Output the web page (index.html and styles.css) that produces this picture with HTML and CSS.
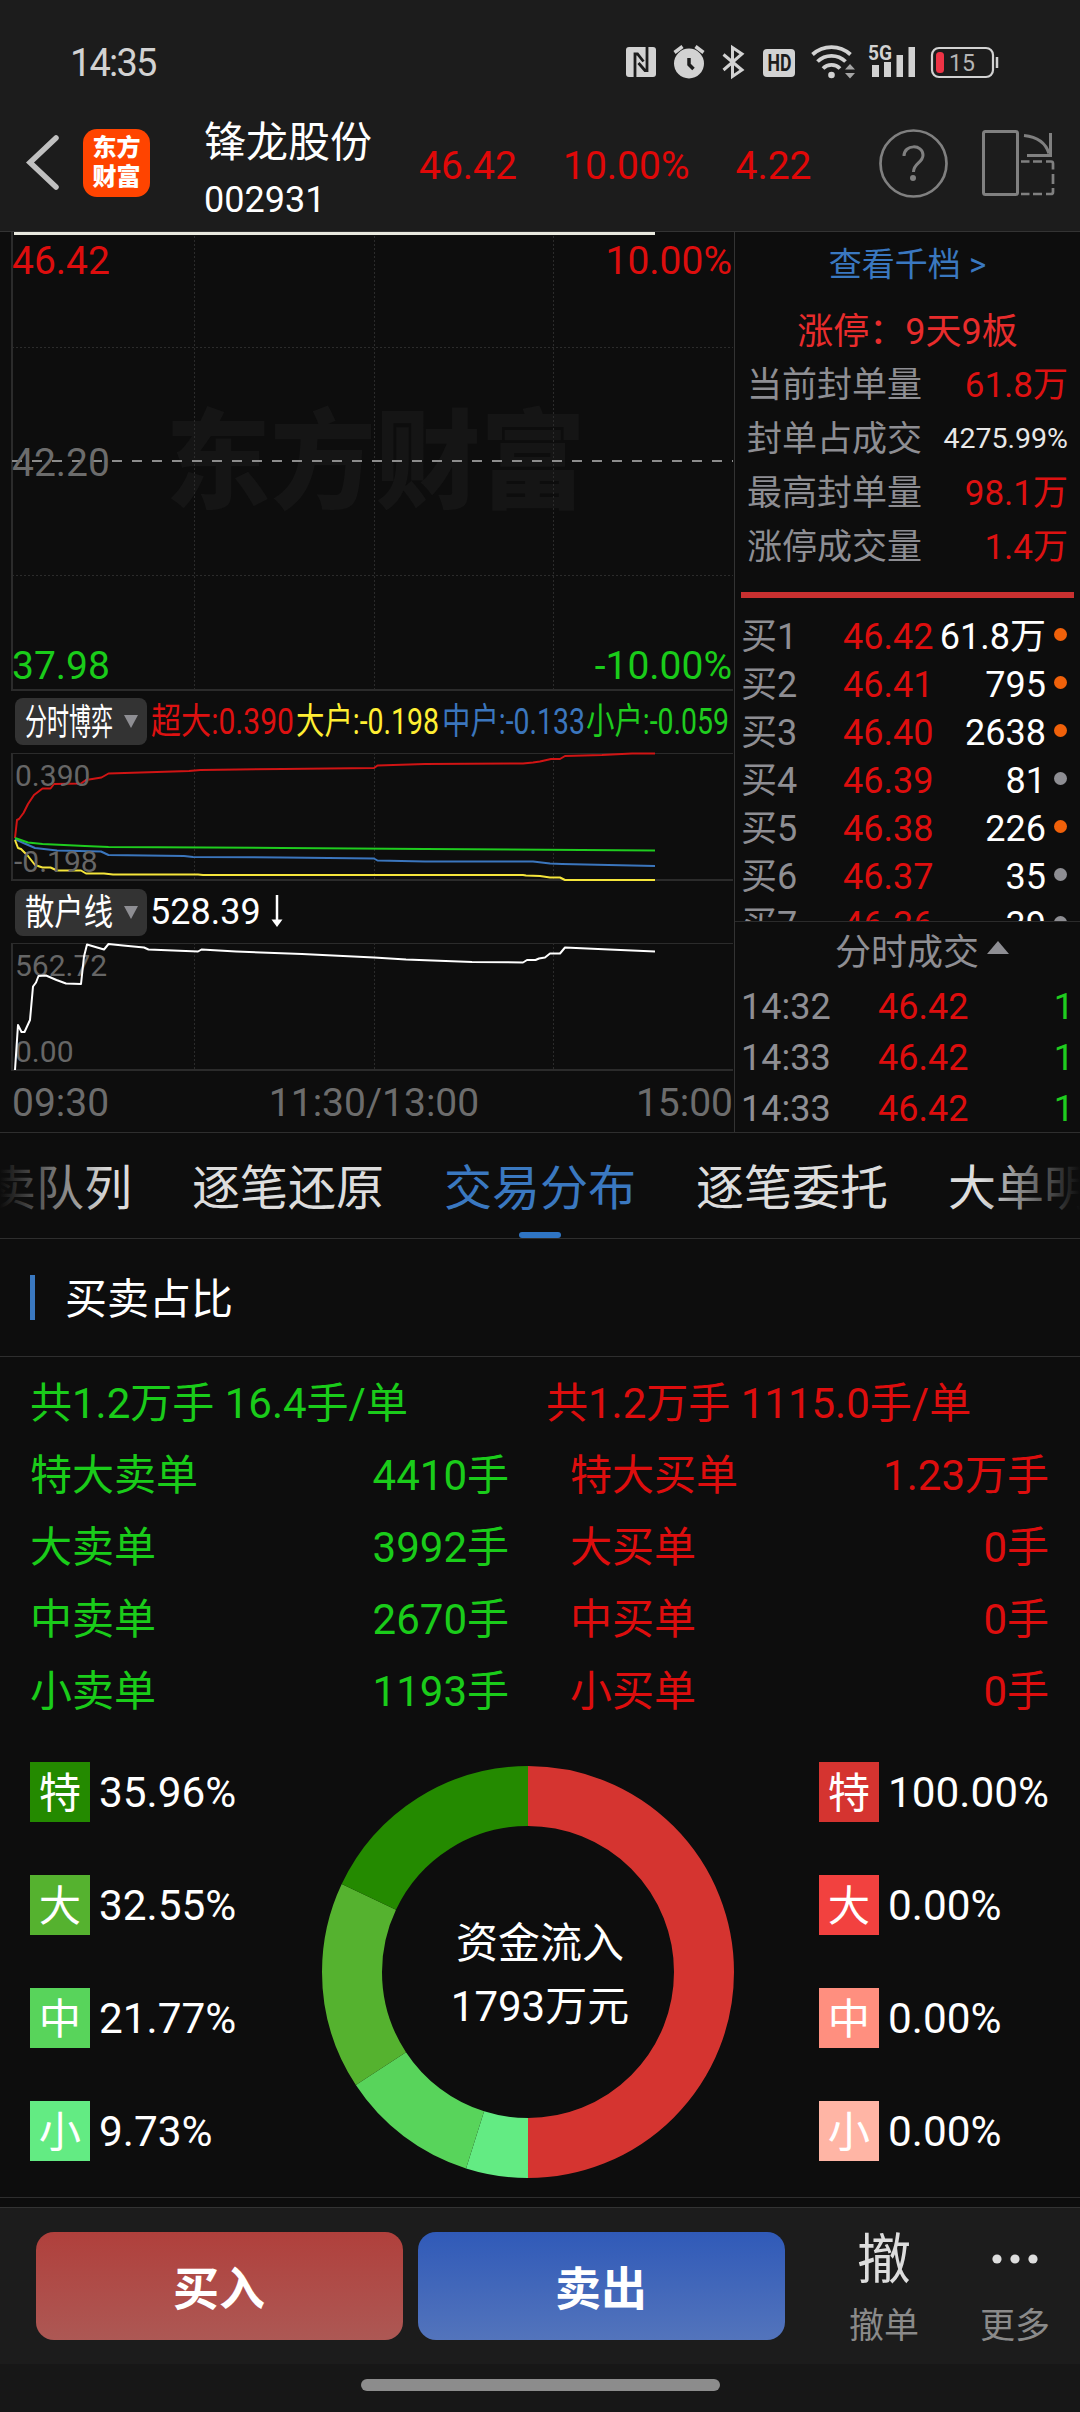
FILE: index.html
```html
<!DOCTYPE html>
<html lang="zh-CN">
<head>
	<title>锋龙股份 002931</title>
	<meta charset="UTF-8">
	<meta name="viewport" content="width=device-width, initial-scale=1.0">
	<link rel="stylesheet" href="styles.css">
</head>
<body>
	<div class="status-bar">
		<span class="clock">14:35</span>
		<svg class="status-icons" width="380" height="40" viewBox="622 42 380 40">
			<!-- nfc -->
			<rect x="626" y="47" width="30" height="30" rx="3" fill="#d2d2d2"/>
			<path d="M635 77V54H637.500L643.500 61.500M647 47V70.500H645L638.500 63" fill="none" stroke="#1c1c1c" stroke-width="2.800"/>
			<!-- alarm -->
			<circle cx="689" cy="63.500" r="15" fill="#d2d2d2"/>
			<path d="M674.500 52.500l8-6M703.500 52.500l-8-6" stroke="#d2d2d2" stroke-width="3.500"/>
			<path d="M689 58v6.500l4.500 4.500" fill="none" stroke="#1c1c1c" stroke-width="3.500"/>
			<!-- bluetooth -->
			<path d="M723.500 54.500L742 70L732.500 76.500V47.500L742 54L723.500 70" fill="none" stroke="#d2d2d2" stroke-width="3"/>
			<!-- hd -->
			<rect x="763" y="49" width="32" height="28" rx="4" fill="#d2d2d2"/>
			<text x="767.500" y="71" class="hd" textLength="24" lengthAdjust="spacingAndGlyphs">HD</text>
			<!-- wifi -->
			<g fill="none" stroke="#d2d2d2" stroke-width="3.800">
				<path d="M812.500 54.500a28 28 0 0 1 38 0"/>
				<path d="M817.500 61.500a20 20 0 0 1 28 0"/>
				<path d="M823 68.500a12 12 0 0 1 17 0"/>
			</g>
			<circle cx="831.500" cy="75" r="3.300" fill="#d2d2d2"/>
			<path d="M850 64l5 5.500h-10zM850 78.500l5-5.500h-10z" fill="#a5a5a5"/>
			<!-- signal -->
			<text x="868" y="60" class="five-g" textLength="24" lengthAdjust="spacingAndGlyphs">5G</text>
			<path d="M872 65h7v12h-7zM884 62h7v15h-7zM896.500 55h6.500v22h-6.500zM908.500 47h6.500v30h-6.500z" fill="#d2d2d2"/>
			<!-- battery -->
			<rect x="932" y="48" width="61" height="29" rx="7" fill="none" stroke="#d2d2d2" stroke-width="2.200"/>
			<path d="M997 57v11" stroke="#d2d2d2" stroke-width="2.500"/>
			<rect x="936" y="52" width="8" height="21" rx="3.500" fill="#ee3345"/>
			<text x="949" y="71" class="battery">15</text>
		</svg>
	</div>

	<div class="header">
		<svg class="back" width="36" height="60" viewBox="25 134 36 60">
			<path d="M56 139L30 163.500L56 188" fill="none" stroke="#c0c0c0" stroke-width="5.500" stroke-linecap="round"/>
		</svg>
		<div class="logo"><span>东方</span><span>财富</span></div>
		<div class="stock">
			<div class="stock-name">锋龙股份</div>
			<div class="stock-code">002931</div>
		</div>
		<div class="quote">
			<span>46.42</span>
			<span>10.00%</span>
			<span>4.22</span>
		</div>
		<svg class="header-icons" width="180" height="72" viewBox="878 127 180 72" fill="none" stroke="#808080">
			<circle cx="913.500" cy="163.500" r="33" stroke-width="2.700"/>
			<path d="M904 156c0-12 19-12 19-1c0 8-9.500 8-9.500 17" stroke-width="3"/>
			<circle cx="913" cy="178" r="3" fill="#808080" stroke="none"/>
			<rect x="983.500" y="131.500" width="34" height="63" rx="2" stroke-width="3"/>
			<path d="M1024 135.500q20 2 25 18" stroke-width="3"/>
			<path d="M1050.500 133v22.500H1027" stroke-width="3"/>
			<path d="M1021 161.500h8.500m3.500 0h9m4 0h5q2 0 2 2v6m0 4.500v10m0 4v4q0 2-2 2h-5m-4 0h-9m-3.500 0H1021" stroke-width="2.700"/>
		</svg>
	</div>

	<div class="market">
		<div class="charts">
			<svg class="price-chart" width="734" height="460" viewBox="0 232 734 460">
				<text x="375.500" y="500" class="watermark" textLength="420" lengthAdjust="spacingAndGlyphs">东方财富</text>
				<path class="grid" d="M194.500 232V690M374.500 232V690M553.500 232V690M12 347.500H733M12 575.500H733"/>
				<path class="frame" d="M12 232V690H733"/>
				<path class="mid" d="M12 461H733"/>
				<path d="M14 233.500H655" stroke="#e9e9df" stroke-width="3"/>
				<text x="12" y="274" class="up">46.42</text>
				<text x="732" y="274" class="up end">10.00%</text>
				<text x="12" y="476" class="axis">42.20</text>
				<text x="12" y="679" class="down">37.98</text>
				<text x="732" y="679" class="down end">-10.00%</text>
			</svg>

			<div class="indicator">
				<button class="pick"><svg width="90" height="44"><text x="0" y="35" textLength="88" lengthAdjust="spacingAndGlyphs">分时博弈</text></svg><i></i></button>
				<svg class="legend" width="582" height="48">
					<text x="0" y="36" textLength="143" lengthAdjust="spacingAndGlyphs">超大:0.390</text>
					<text x="145" y="36" textLength="143" lengthAdjust="spacingAndGlyphs">大户:-0.198</text>
					<text x="291" y="36" textLength="143" lengthAdjust="spacingAndGlyphs">中户:-0.133</text>
					<text x="435" y="36" textLength="143" lengthAdjust="spacingAndGlyphs">小户:-0.059</text>
				</svg>
			</div>

			<svg class="sub-chart" width="734" height="132" viewBox="0 751 734 132">
				<path class="grid" d="M194.500 753V880M374.500 753V880M553.500 753V880"/>
				<path class="frame thin" d="M12 753.500H733"/>
				<path class="frame" d="M12 753V880H733"/>
				<g class="lines">
					<polyline stroke="#d01414" points="15,838 17,820 19,819 23.500,813 28,804 34,795 42.500,788.500 50.500,788.500 54,784 81,783.500 86,780 101.500,777.500 108.500,773.500 189,771 200.500,770 283,769 374,768 377.500,765.500 425,764 523,763.500 533,762.500 540,761.500 551,759 560,759 565,756 602,755 632,753.500 655,753.500"/>
					<polyline stroke="#3b76bd" points="15,839 23.500,843 35,848 57,850.500 101,851.500 108.500,855 184,856 193,857 283,857.500 374,858.500 377.500,860.500 425,861.500 533,861.500 550,863.500 562,864 655,866"/>
					<polyline stroke="#f5e53b" points="15,840 18,848 21,849 28,856 35,865 42.500,867.500 50.500,867.500 57,870.500 81,870.500 86,873.500 104,873.500 113,874.500 198,874.500 203,875 523,875 526,875.500 540,876 550,877.500 560,877.500 565,880 655,880"/>
					<polyline stroke="#1fcc1f" points="15,838 28,842.500 42.500,844 85,846 108.500,847 283,848 425,849 655,850.500"/>
				</g>
				<text x="15" y="786" class="scale">0.390</text>
				<text x="14" y="872" class="scale">-0.198</text>
			</svg>

			<div class="indicator second">
				<button class="pick"><svg width="90" height="44"><text x="0" y="35" textLength="88" lengthAdjust="spacingAndGlyphs">散户线</text></svg><i></i></button>
				<span class="value">528.39</span>
				<svg width="14" height="34" viewBox="0 0 14 34"><path d="M7 0v28" stroke="#fff" stroke-width="2.500"/><path d="M1.500 24.500h11L7 32z" fill="#fff"/></svg>
			</div>

			<svg class="sub-chart" width="734" height="132" viewBox="0 941 734 132">
				<path class="grid" d="M194.500 943V1070M374.500 943V1070M553.500 943V1070"/>
				<path class="frame thin" d="M12 943.500H733"/>
				<path class="frame" d="M12 943V1070H733"/>
				<text x="15" y="975.500" class="scale">562.72</text>
				<text x="15" y="1061.500" class="scale">0.00</text>
				<g class="lines">
					<polyline stroke="#ffffff" points="15,1070 18,1025 21.500,1032 24.500,1032 30,1020 33,986.500 36,982.500 38.500,976 46,975.500 56.500,980 66,983.500 81,984 84,956.500 87,944.500 104,949.500 108.500,944 123,945.500 144,947.500 148.500,949.500 198,951.500 201.500,949.500 236,951.500 302,954 374,957.500 406,959.500 472,962 523,962.500 527,960 535.500,960 539,958.500 545,957.500 550,953.500 560,953.500 565,947.500 609,949.500 655,951.500"/>
				</g>
			</svg>
			<div class="times">
				<span>09:30</span>
				<span>11:30/13:00</span>
				<span>15:00</span>
			</div>
		</div>

		<div class="side">
			<div class="more-levels">查看千档 &gt;</div>
			<div class="limit">涨停：9天9板</div>
			<div class="facts">
				<div><span>当前封单量</span><b>61.8万</b></div>
				<div><span>封单占成交</span><b class="small">4275.99%</b></div>
				<div><span>最高封单量</span><b>98.1万</b></div>
				<div><span>涨停成交量</span><b>1.4万</b></div>
			</div>
			<div class="split"></div>
			<div class="bids">
				<div class="bid"><span>买1</span><b>46.42</b><em>61.8万</em><i class="hot"></i></div>
				<div class="bid"><span>买2</span><b>46.41</b><em>795</em><i class="hot"></i></div>
				<div class="bid"><span>买3</span><b>46.40</b><em>2638</em><i class="hot"></i></div>
				<div class="bid"><span>买4</span><b>46.39</b><em>81</em><i></i></div>
				<div class="bid"><span>买5</span><b>46.38</b><em>226</em><i class="hot"></i></div>
				<div class="bid"><span>买6</span><b>46.37</b><em>35</em><i></i></div>
				<div class="bid"><span>买7</span><b>46.36</b><em>39</em><i></i></div>
			</div>
			<div class="ticks-title">分时成交<i></i></div>
			<div class="tick"><span>14:32</span><b>46.42</b><em>1</em></div>
			<div class="tick"><span>14:33</span><b>46.42</b><em>1</em></div>
			<div class="tick"><span>14:33</span><b>46.42</b><em>1</em></div>
		</div>
	</div>

	<div class="tabs">
		<span>买卖队列</span>
		<span>逐笔还原</span>
		<span class="active">交易分布</span>
		<span>逐笔委托</span>
		<span>大单明细</span>
	</div>

	<div class="section-title">买卖占比</div>

	<div class="orders">
		<div class="sell">
			<div class="total">共1.2万手 16.4手/单</div>
			<div class="row"><span>特大卖单</span><span>4410手</span></div>
			<div class="row"><span>大卖单</span><span>3992手</span></div>
			<div class="row"><span>中卖单</span><span>2670手</span></div>
			<div class="row"><span>小卖单</span><span>1193手</span></div>
		</div>
		<div class="buy">
			<div class="total">共1.2万手 1115.0手/单</div>
			<div class="row"><span>特大买单</span><span>1.23万手</span></div>
			<div class="row"><span>大买单</span><span>0手</span></div>
			<div class="row"><span>中买单</span><span>0手</span></div>
			<div class="row"><span>小买单</span><span>0手</span></div>
		</div>
	</div>

	<div class="share">
		<div class="keys">
			<div class="key"><i class="s1">特</i>35.96%</div>
			<div class="key"><i class="s2">大</i>32.55%</div>
			<div class="key"><i class="s3">中</i>21.77%</div>
			<div class="key"><i class="s4">小</i>9.73%</div>
		</div>
		<div class="donut">
			<!-- each half of the ring counts as 100 -->
			<svg width="412" height="412" viewBox="0 0 412 412">
				<g fill="none" stroke-width="60" transform="rotate(-90 206 206)">
					<circle cx="206" cy="206" r="176" pathLength="200" stroke="#d53430" stroke-dasharray="100 100"/>
					<circle cx="206" cy="206" r="176" pathLength="200" stroke="#63eb83" stroke-dasharray="9.730 190.270" stroke-dashoffset="-100"/>
					<circle cx="206" cy="206" r="176" pathLength="200" stroke="#58d45b" stroke-dasharray="21.770 178.230" stroke-dashoffset="-109.730"/>
					<circle cx="206" cy="206" r="176" pathLength="200" stroke="#55b22f" stroke-dasharray="32.550 167.450" stroke-dashoffset="-131.500"/>
					<circle cx="206" cy="206" r="176" pathLength="200" stroke="#248a00" stroke-dasharray="35.950 164.050" stroke-dashoffset="-164.050"/>
				</g>
			</svg>
			<div class="flow">资金流入<br>1793万元</div>
		</div>
		<div class="keys right">
			<div class="key"><i class="b1">特</i>100.00%</div>
			<div class="key"><i class="b2">大</i>0.00%</div>
			<div class="key"><i class="b3">中</i>0.00%</div>
			<div class="key"><i class="b4">小</i>0.00%</div>
		</div>
	</div>

	<div class="trade-bar">
		<button class="btn buy-btn">买入</button>
		<button class="btn sell-btn">卖出</button>
		<div class="action"><span class="glyph">撤</span><span>撤单</span></div>
		<div class="action more">
			<svg class="glyph" width="48" height="54"><g fill="#dddddd"><circle cx="6" cy="25" r="4.600"/><circle cx="24" cy="25" r="4.600"/><circle cx="42" cy="25" r="4.600"/></g></svg>
			<span>更多</span>
		</div>
	</div>
	<div class="home"><div></div></div>
</body>
</html>
```

FILE: styles.css
```css
* {
	box-sizing: border-box;
}

body {
	margin: 0;
	width: 1080px;
	height: 2412px;
	overflow: hidden;
	background-color: #0d0d0d;
	color: #ffffff;
	font-family: Roboto, "Noto Sans CJK SC", sans-serif;
	font-size: 36px;
	white-space: nowrap;
}

b, em, i {
	font-weight: normal;
	font-style: normal;
}

svg {
	display: block;
	flex: none;
}

button {
	border: none;
	padding: 0;
	color: #ffffff;
	font-family: inherit;
}

/* top */
.status-bar {
	display: flex;
	justify-content: space-between;
	align-items: center;
	height: 95px;
	padding: 29px 78px 0 70px;
	background-color: #1c1c1c;
}

.clock {
	padding-top: 2px;
	color: #d2d2d2;
	font-size: 38px;
	letter-spacing: -1.8px;
}

.hd {
	font: bold 23px Roboto, sans-serif;
	fill: #1c1c1c;
}

.five-g {
	font: bold 20px Roboto, sans-serif;
	fill: #d2d2d2;
}

.battery {
	font-size: 23px;
	fill: #b5b5b5;
}

.header {
	display: flex;
	align-items: center;
	height: 137px;
	padding: 0 22px 0 25px;
	background-color: #1c1c1c;
	border-bottom: 1px solid #333333;
}

.logo {
	display: flex;
	flex-direction: column;
	justify-content: center;
	align-items: center;
	width: 67px;
	height: 68px;
	margin-left: 22px;
	border-radius: 14px;
	background-color: #ff4400;
	font-size: 24px;
	font-weight: 900;
	line-height: 29px;
}

.stock {
	width: 180px;
	margin-left: 54px;
	padding-top: 13px;
}

.stock-name {
	font-size: 42px;
	line-height: 60px;
}

.stock-code {
	line-height: 54px;
}

.quote {
	display: flex;
	flex: 1;
	gap: 46px;
	margin-left: 35px;
	padding-top: 5px;
	color: #e00808;
	font-size: 39px;
}

/* charts */
.market {
	display: flex;
	height: 901px;
	border-bottom: 1px solid #2e2e2e;
}

.charts {
	width: 734px;
}

.charts text {
	font-size: 36px;
	fill: #ffffff;
}

.charts .up, .charts .down, .charts .axis {
	font-size: 39px;
}

.charts .up {
	fill: #dd0d0d;
}

.charts .down {
	fill: #1acc1a;
}

.charts .axis {
	fill: #6c6c6c;
}

.charts .end {
	text-anchor: end;
}

.charts .scale {
	font-size: 30px;
	fill: #666666;
}

.charts .watermark {
	font-size: 108px;
	font-weight: 900;
	fill: #151515;
	text-anchor: middle;
}

.grid {
	stroke: #2b2b2b;
	stroke-dasharray: 2 2;
}

.frame {
	fill: none;
	stroke: #2b2b2b;
	stroke-width: 2;
}

.frame.thin {
	stroke-width: 1;
}

.mid {
	stroke: #8c8c8c;
	stroke-width: 2;
	stroke-dasharray: 10 10;
}

.lines {
	fill: none;
	stroke-width: 2;
	stroke-linejoin: round;
}

.indicator {
	display: flex;
	align-items: center;
	height: 59px;
	padding-left: 15px;
}

.indicator.second {
	height: 58px;
}

.pick {
	display: flex;
	align-items: center;
	width: 132px;
	height: 47px;
	padding-left: 10px;
	border-radius: 8px;
	background-color: #333333;
}

.pick i {
	margin: 0 0 0 9px;
	border: 7px solid transparent;
	border-top: 13px solid #8e8e93;
	border-bottom: 0;
}

.legend {
	margin-left: 4px;
}

.charts .legend text:nth-child(1) { fill: #dd1111; }
.charts .legend text:nth-child(2) { fill: #ffee33; }
.charts .legend text:nth-child(3) { fill: #3b76bd; }
.charts .legend text:nth-child(4) { fill: #1fcc1f; }

.value {
	margin: 0 9px 0 3px;
}

.times {
	display: flex;
	justify-content: space-between;
	height: 58px;
	padding: 0 1px 0 12px;
	color: #6c6c6c;
	font-size: 39px;
	line-height: 60px;
}

.times span:nth-child(2) {
	padding-left: 3px;
}

/* order book */
.side {
	flex: 1;
	border-left: 1px solid #333333;
	color: #8e8e93;
}

.more-levels {
	height: 64px;
	color: #3a78c0;
	font-size: 33px;
	line-height: 66px;
	text-align: center;
}

.limit {
	height: 61px;
	color: #e82c2c;
	line-height: 73px;
	text-align: center;
}

.facts div {
	display: flex;
	justify-content: space-between;
	height: 54px;
	padding: 0 12px;
	font-size: 35px;
	line-height: 57px;
}

.facts b {
	color: #dd1111;
	font-size: 35px;
}

.facts .small {
	color: #e8e8e8;
	font-size: 28.500px;
	line-height: 55px;
}

.split {
	height: 6px;
	margin: 19px 6px 14px;
	background-color: #c83030;
}

.bids {
	height: 310px;
	overflow: hidden;
	border-bottom: 1px solid #2b2b2b;
}

.bid, .tick {
	display: flex;
	align-items: center;
	height: 48px;
	padding: 0 13px 0 6px;
	line-height: 48px;
}

.bid span, .bid b, .bid em {
	padding-top: 2px;
}

.bid span {
	width: 102px;
}

.bid b, .tick b {
	color: #dd0d0d;
}

.bid em {
	flex: 1;
	color: #ffffff;
	text-align: right;
}

.bid i {
	width: 13px;
	height: 13px;
	margin: 0 0 4px 8px;
	border-radius: 50%;
	background-color: #8e8e93;
}

.bid .hot {
	background-color: #f0610a;
}

.ticks-title {
	display: flex;
	justify-content: center;
	align-items: center;
	height: 59px;
	padding-left: 29px;
	line-height: 59px;
	padding-top: 3px;
}

.ticks-title i {
	margin: 0 0 11px 8px;
	border: 11px solid transparent;
	border-top: 0;
	border-bottom: 13px solid #8e8e93;
}

.tick {
	height: 51px;
	padding-right: 6px;
}

.tick span {
	width: 137px;
}

.tick em {
	flex: 1;
	color: #1fcc1f;
	text-align: right;
}

/* tabs */
.tabs {
	position: relative;
	display: flex;
	justify-content: center;
	gap: 60px;
	height: 106px;
	overflow: hidden;
	border-bottom: 1px solid #2e2e2e;
	color: #dddddd;
	font-size: 48px;
	line-height: 111px;
}

.tabs .active {
	position: relative;
	height: 105px;
	color: #3a78c0;
}

.tabs .active::after {
	content: "";
	position: absolute;
	left: 75px;
	bottom: 0;
	width: 42px;
	height: 6px;
	border-radius: 3px;
	background-color: #2f75c4;
}

/* fade out the cut off tabs */
.tabs::before {
	content: "";
	position: absolute;
	z-index: 1;
	top: 0;
	left: 0;
	right: 0;
	height: 104px;
	background: linear-gradient(to right, #0d0d0d, transparent 110px, transparent 980px, #0d0d0d);
}

.section-title {
	display: flex;
	align-items: center;
	height: 118px;
	padding: 4px 30px 0;
	border-bottom: 1px solid #2e2e2e;
	font-size: 42px;
	line-height: 114px;
}

.section-title::before {
	content: "";
	width: 5px;
	height: 45px;
	margin: 0 30px 4px 0;
	background-color: #3a78c0;
}

.orders {
	display: flex;
	height: 379px;
	padding: 10px 31px 0 30px;
	font-size: 42px;
	line-height: 73px;
}

.total {
	height: 72px;
}

.sell {
	width: 479px;
	color: #1acc1a;
}

.buy {
	flex: 1;
	margin-left: 37px;
	color: #dd0d0d;
}

.row {
	display: flex;
	justify-content: space-between;
	height: 72px;
}

.buy .row {
	padding-left: 24px;
}

/* share */
.share {
	display: flex;
	height: 462px;
	padding: 26px 30px 0;
	border-bottom: 1px solid #2e2e2e;
	font-size: 42px;
}

.keys {
	width: 292px;
}

.key {
	display: flex;
	align-items: center;
	gap: 9px;
	height: 60px;
	margin-bottom: 53px;
	font-size: 42.300px;
	line-height: 63px;
}

.key i {
	width: 60px;
	height: 60px;
	text-align: center;
}

.s1 { background-color: #248a00; }
.s2 { background-color: #55b22f; }
.s3 { background-color: #58d45b; }
.s4 { background-color: #63eb83; }
.b1 { background-color: #d53430; }
.b2 { background-color: #f2413f; }
.b3 { background-color: #ff8f7f; }
.b4 { background-color: #ffb5a5; }

.donut {
	position: relative;
	width: 412px;
	margin-top: 4px;
}

.flow {
	position: absolute;
	left: 12px;
	top: 146px;
	width: 100%;
	line-height: 63px;
	text-align: center;
}

.keys.right {
	width: auto;
	margin-left: 85px;
}

/* bottom */
.trade-bar {
	display: flex;
	height: 157px;
	margin-top: 9px;
	padding: 24px 30px 0 36px;
	border-top: 1px solid #333333;
	background-color: #1c1c1c;
}

.btn {
	width: 367px;
	height: 108px;
	margin-right: 15px;
	padding: 0 1px 2px 0;
	border-radius: 18px;
	font-size: 46px;
	font-weight: bold;
}

.buy-btn {
	background: linear-gradient(#b0403c, #ad5854);
}

.sell-btn {
	background: linear-gradient(#305ab8, #5374bc);
}

.action {
	display: flex;
	flex-direction: column;
	align-items: center;
	width: 70px;
	margin-left: 49px;
	padding-top: 2px;
	color: #8a8a8a;
	font-size: 35px;
	line-height: 52px;
}

.action .glyph {
	height: 54px;
	margin-bottom: 13px;
	color: #dddddd;
	font-size: 54px;
	line-height: 54px;
}

.action.more {
	margin-left: 61px;
}

.home {
	height: 48px;
	padding-top: 15px;
	background-color: #171717;
}

.home div {
	width: 359px;
	height: 12px;
	margin: 0 auto;
	border-radius: 6px;
	background-color: #8c8c8c;
}
```
